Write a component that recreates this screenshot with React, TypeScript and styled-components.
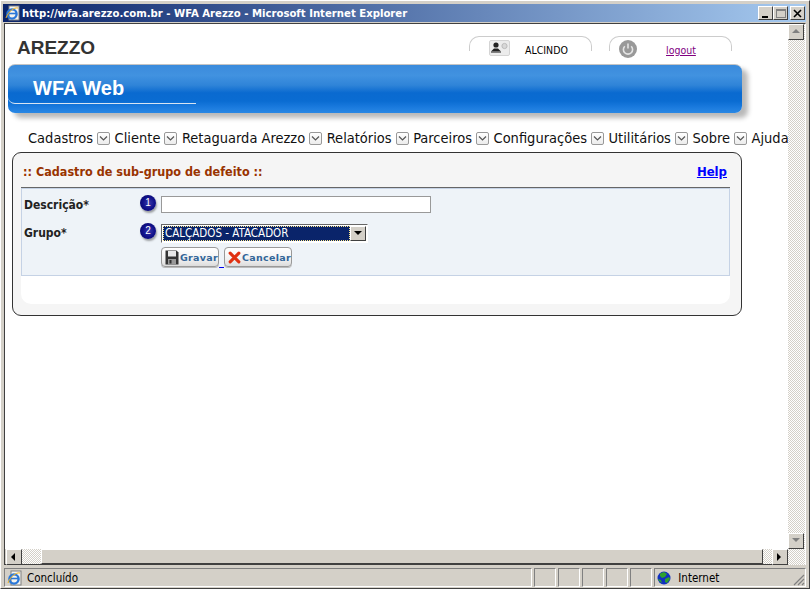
import React from "react";
import styled, { createGlobalStyle } from "styled-components";

const tahoma = `"DejaVu Sans Condensed", "DejaVu Sans", sans-serif`;
const verdana = `"DejaVu Sans", sans-serif`;
const arial = `"Liberation Sans", Arial, sans-serif`;
const hatch = `conic-gradient(#ffffff 25%, #d4d0c8 0 50%, #ffffff 0 75%, #d4d0c8 0) 0 0 / 2px 2px`;

const Global = createGlobalStyle`
	html, body {
		margin: 0;
		padding: 0;
		background: #d4d0c8;
	}
	* {
		box-sizing: border-box;
	}
`;

const Win = styled.div`
	width: 810px;
	height: 589px;
	display: flex;
	flex-direction: column;
	background: #d4d0c8;
	padding: 3px 3px 0 3px;
	border-right: 1px solid #404040;
	border-bottom: 1px solid #404040;
	border-top: 1px solid #ffffff;
	border-left: 1px solid #ffffff;
	overflow: hidden;
`;

const TitleBar = styled.div`
	height: 18px;
	flex: none;
	display: flex;
	align-items: center;
	padding: 0 1px 0 2px;
	margin-left: -1px;
	background: linear-gradient(90deg, #0a246a, #a6caf0);
`;

const TitleText = styled.span`
	margin-left: 1px;
	color: #ffffff;
	font-family: ${tahoma};
	font-size: 11.25px;
	font-weight: bold;
	white-space: nowrap;
`;

const WinButtons = styled.div`
	margin-left: auto;
	display: flex;
	align-items: center;
`;

const WinButton = styled.div<{ $gap?: number }>`
	width: 15px;
	height: 14px;
	margin-left: ${(p) => p.$gap ?? 0}px;
	display: flex;
	align-items: center;
	justify-content: center;
	background: #d4d0c8;
	border: 1px solid;
	border-color: #ffffff #404040 #404040 #ffffff;
`;

const Viewport = styled.div`
	margin-top: 1px;
	height: 542px;
	flex: none;
	display: grid;
	grid-template-columns: minmax(0, 1fr) 17px;
	grid-template-rows: minmax(0, 1fr) 16px;
	background: #ffffff;
	border: 1px solid;
	border-color: #404040 #ffffff #ffffff #404040;
	border-bottom-width: 0;
`;

const Page = styled.div`
	grid-column: 1;
	grid-row: 1;
	overflow: hidden;
	min-width: 0;
	background: #ffffff;
	padding-left: 3px;
`;

const Header = styled.div`
	height: 40px;
	width: 724px;
	display: flex;
	align-items: flex-start;
	padding-left: 9px;
`;

const Logo = styled.div`
	margin-top: 13px;
	color: #333333;
	font-family: ${arial};
	font-size: 19px;
	font-weight: bold;
	line-height: 22px;
`;

const Tabs = styled.div`
	margin-left: auto;
	display: flex;
	gap: 17px;
	padding-top: 12px;
`;

const Tab = styled.div`
	position: relative;
	width: 123px;
	height: 15px;
	border: 1px solid #cccccc;
	border-bottom: none;
	border-radius: 10px 10px 0 0;
	display: flex;
	align-items: flex-start;
`;

const TabIcon = styled.div<{ $left: number }>`
	margin-left: ${(p) => p.$left}px;
	margin-top: 3px;
	flex: none;
	height: 20px;
`;

const TabLabel = styled.span<{ $left: number }>`
	margin-left: ${(p) => p.$left}px;
	margin-top: 7px;
	font-family: ${tahoma};
	font-size: 10.5px;
	line-height: 13px;
	color: #000000;
`;

const LogoutLink = styled.a`
	margin-left: 29px;
	margin-top: 7px;
	font-family: ${tahoma};
	font-size: 10.5px;
	line-height: 13px;
	color: #800080;
	text-decoration: underline;
`;

const Banner = styled.div`
	width: 734px;
	height: 49px;
	border-top: 1px solid #c4c4c4;
	border-radius: 7px;
	background: linear-gradient(180deg, #3b8bdc 0%, #4192e0 22%, #2f84d8 42%, #0a6ad0 58%, #0a6cd2 75%, #1a7ade 88%, #2a88e4 100%);
	box-shadow: 6px 5px 5px rgba(0, 0, 0, 0.28);
`;

const BannerTitle = styled.div`
	width: 188px;
	height: 39px;
	padding: 12px 0 0 25px;
	border-bottom: 1px solid #d8e4f2;
	border-radius: 0 0 0 7px;
	color: #ffffff;
	font-family: ${arial};
	font-size: 20px;
	font-weight: bold;
	line-height: 23px;
`;

const Menu = styled.div`
	display: flex;
	align-items: center;
	height: 17px;
	margin-top: 17px;
	padding-left: 20px;
	white-space: nowrap;
`;

const MenuItem = styled.div`
	display: flex;
	align-items: center;
	flex: none;
	margin-right: 4.5px;
	color: #111111;
	font-family: ${tahoma};
	font-size: 14.5px;
	line-height: 17px;
`;

const MenuArrow = styled.span`
	width: 13px;
	height: 13px;
	margin-left: 4px;
	border: 1px solid #999999;
	border-radius: 2px;
	background: linear-gradient(180deg, #ffffff, #ececec);
	display: flex;
	align-items: center;
	justify-content: center;
`;

const Panel = styled.div`
	width: 730px;
	height: 164px;
	margin: 5px 0 0 4px;
	padding: 0 11px 11px 8px;
	border: 1px solid #333333;
	border-radius: 9px;
	background: #f5f5f5;
	display: flex;
	flex-direction: column;
`;

const PanelHead = styled.div`
	height: 35px;
	flex: none;
	display: flex;
	align-items: center;
	justify-content: space-between;
	padding: 2px 3px 0 2px;
	border-bottom: 1px solid #666666;
`;

const PanelTitle = styled.span`
	color: #993300;
	font-family: ${tahoma};
	font-size: 12.5px;
	font-weight: bold;
`;

const HelpLink = styled.a`
	color: #0000ff;
	font-family: ${tahoma};
	font-size: 13px;
	font-weight: bold;
	text-decoration: underline;
`;

const PanelBody = styled.div`
	flex: 1;
	background: #ffffff;
	border-radius: 0 0 10px 10px;
`;

const Form = styled.div`
	height: 88px;
	padding: 7px 0 0 2px;
	background: #eef3f8;
	border: 1px solid #c5d2e5;
	display: grid;
	grid-template-columns: 116px 21px 1fr;
	grid-template-rows: 28px 23px auto;
	align-items: start;
`;

const FieldLabel = styled.div`
	margin-top: 1px;
	color: #222222;
	font-family: ${tahoma};
	font-size: 12px;
	font-weight: bold;
	line-height: 16px;
`;

const Badge = styled.div`
	width: 16px;
	height: 16px;
	margin-top: -1px;
	border-radius: 50%;
	background: radial-gradient(circle at 55% 50%, #3a3aaa 0%, #10108a 50%, #06065c 100%);
	box-shadow: 1px 2px 2px rgba(0, 0, 0, 0.35);
	color: #ffffff;
	font-family: ${arial};
	font-size: 10px;
	line-height: 16px;
	text-align: center;
`;

const TextInput = styled.div`
	width: 270px;
	height: 17px;
	background: #ffffff;
	border: 1px solid #999999;
`;

const SelectBox = styled.div`
	width: 207px;
	height: 19px;
	display: flex;
	background: #ffffff;
	padding: 1px;
	border: 1px solid;
	border-color: #666666 #ffffff #ffffff #666666;
`;

const SelectValue = styled.div`
	flex: 1;
	background: #0a246a;
	outline: 1px dotted #ffe98a;
	outline-offset: -1px;
	color: #ffffff;
	font-family: ${tahoma};
	font-size: 11.5px;
	line-height: 15px;
	padding-left: 2px;
`;

const SelectArrow = styled.div`
	width: 16px;
	display: flex;
	align-items: center;
	justify-content: center;
	background: #d4d0c8;
	border: 1px solid;
	border-color: #ffffff #404040 #404040 #ffffff;
`;

const Buttons = styled.div`
	grid-column: 3;
	display: flex;
	align-items: flex-end;
`;

const Btn = styled.div<{ $w: number }>`
	width: ${(p) => p.$w}px;
	height: 20px;
	display: flex;
	align-items: center;
	padding-left: 3px;
	gap: 1px;
	background: linear-gradient(180deg, #ffffff, #f2f2f2 60%, #dcdcdc);
	border: 1px solid #999999;
	border-radius: 4px;
	box-shadow: 0 1px 0 #bbbbbb;
	color: #336699;
	font-family: ${verdana};
	font-size: 9.5px;
	font-weight: bold;
	letter-spacing: 0.3px;
`;

const BtnSpace = styled.span`
	width: 5px;
	height: 2px;
	margin-bottom: -1px;
	border-bottom: 1px solid #0000ee;
`;

const VScroll = styled.div`
	grid-column: 2;
	grid-row: 1 / 3;
	display: flex;
	flex-direction: column;
	padding-bottom: 16px;
	background: ${hatch};
`;

const ScrollBtn = styled.div<{ $disabled?: boolean }>`
	width: 16px;
	height: 16px;
	flex: none;
	display: flex;
	align-items: center;
	justify-content: center;
	background: #d4d0c8;
	border: 1px solid;
	border-color: #ffffff #404040 #404040 #ffffff;
`;

const VSpacer = styled.div`
	flex: 1;
`;

const HScroll = styled.div`
	grid-column: 1;
	grid-row: 2;
	display: flex;
	background: #d4d0c8;
	border-bottom: 1px solid #404040;
	padding-left: 1px;
`;

const HTrack = styled.div<{ $w?: number }>`
	flex: ${(p) => (p.$w ? `0 0 ${p.$w}px` : "1")};
	background: ${hatch};
`;

const HThumb = styled.div`
	flex: 1;
	background: #d4d0c8;
	border: 1px solid;
	border-color: #ffffff #404040 #404040 #ffffff;
`;

const StatusBar = styled.div`
	height: 19px;
	margin-top: 3px;
	flex: none;
	display: flex;
	gap: 2px;
`;

const StatusCell = styled.div<{ $w?: number; $grow?: boolean }>`
	position: relative;
	flex: ${(p) => (p.$grow ? "1" : `0 0 ${p.$w}px`)};
	display: flex;
	align-items: center;
	gap: 4px;
	padding-left: 2px;
	border: 1px solid;
	border-color: #808080 #ffffff #ffffff #808080;
	font-family: ${tahoma};
	font-size: 11.5px;
	color: #000000;
`;

const Grip = styled.svg`
	position: absolute;
	right: 0;
	bottom: 0;
`;

const IeIcon = ({ size = 16 }: { size?: number }) => (
	<svg width={size} height={size} viewBox="0 0 16 16">
		<rect x="4" y="1" width="10" height="14" fill="#f4f4f0" stroke="#808080" />
		<circle cx="7" cy="9" r="4.6" fill="none" stroke="#2b78d8" strokeWidth="2.4" />
		<path d="M3 8.5h8.5" stroke="#2b78d8" strokeWidth="1.6" />
		<path d="M1 13C3 7 9 2 13 3" fill="none" stroke="#f0b020" strokeWidth="1" />
	</svg>
);

const GlobeIcon = () => (
	<svg width="14" height="14" viewBox="0 0 14 14">
		<circle cx="7" cy="7" r="6.5" fill="#1030c0" />
		<path d="M3 2.5 7 1l3 2-2 3-3 1-2-2zM8 8l4-2 1 2-3 4-2-1zM1 8l3 1 1 3-3-2z" fill="#2ea02e" />
	</svg>
);

const UserCard = () => (
	<svg width="21" height="17" viewBox="0 0 21 17">
		<rect x="0.5" y="0.5" width="20" height="15" rx="1.5" fill="#ececec" stroke="#d4d4d4" />
		<circle cx="7" cy="5" r="2.6" fill="#222222" />
		<path d="M2 11.5 5 8.5h4l3 3z" fill="#222222" />
		<rect x="2" y="11.5" width="10" height="1.2" fill="#555555" />
		<circle cx="15.5" cy="6" r="2.6" fill="#d8d8d8" stroke="#bbbbbb" />
	</svg>
);

const PowerIcon = () => (
	<svg width="18" height="18" viewBox="0 0 18 18">
		<circle cx="9" cy="9" r="9" fill="#999999" />
		<path d="M5.8 6.2a4.6 4.6 0 1 0 6.4 0" fill="none" stroke="#e4e4e4" strokeWidth="1.6" />
		<path d="M9 3.6v5" stroke="#e4e4e4" strokeWidth="1.6" />
	</svg>
);

const FloppyIcon = () => (
	<svg width="14" height="15" viewBox="0 0 14 15">
		<path d="M0.5 0.5h11l2 2v12h-13z" fill="#333333" />
		<rect x="3" y="1" width="8" height="5.5" fill="#e8e8e8" />
		<rect x="3" y="9" width="8" height="5.5" fill="#999999" />
		<rect x="4.5" y="10" width="2" height="3.5" fill="#333333" />
	</svg>
);

const CancelIcon = () => (
	<svg width="15" height="15" viewBox="0 0 15 15">
		<path d="M2.5 2.5 12.5 12.5M12.5 2.5 2.5 12.5" stroke="#e03010" strokeWidth="3.6" strokeLinecap="round" />
	</svg>
);

const Chevron = () => (
	<svg width="9" height="7" viewBox="0 0 9 7">
		<path d="M1 1.5 4.5 5 8 1.5" fill="none" stroke="#555555" strokeWidth="1.2" />
	</svg>
);

const Tri = ({ dir, color = "#000000" }: { dir: "up" | "down" | "left" | "right"; color?: string }) => {
	const pts = {
		up: "4,1 8,5 0,5",
		down: "0,1 8,1 4,5",
		left: "5,0 5,8 1,4",
		right: "1,0 1,8 5,4",
	}[dir];
	return (
		<svg width="8" height="8" viewBox="0 0 8 8">
			<polygon points={pts} fill={color} />
		</svg>
	);
};

const menuItems = ["Cadastros", "Cliente", "Retaguarda Arezzo", "Relatórios", "Parceiros", "Configurações", "Utilitários", "Sobre", "Ajuda"];

const App = () => {
	return (
		<Win>
			<Global />
			<TitleBar>
				<IeIcon />
				<TitleText>http://wfa.arezzo.com.br - WFA Arezzo - Microsoft Internet Explorer</TitleText>
				<WinButtons>
					<WinButton>
						<svg width="9" height="9" viewBox="0 0 9 9"><rect x="1" y="7" width="6" height="2" fill="#000" /></svg>
					</WinButton>
					<WinButton>
						<svg width="10" height="9" viewBox="0 0 10 9"><rect x="0.5" y="0.5" width="9" height="8" fill="none" stroke="#808080" /><rect x="0" y="0" width="10" height="2" fill="#808080" /></svg>
					</WinButton>
					<WinButton $gap={2}>
						<svg width="9" height="9" viewBox="0 0 9 9"><path d="M1 1l7 7M8 1 1 8" stroke="#000" strokeWidth="1.6" /></svg>
					</WinButton>
				</WinButtons>
			</TitleBar>

			<Viewport>
				<Page>
					<Header>
						<Logo>AREZZO</Logo>
						<Tabs>
							<Tab>
								<TabIcon $left={19}><UserCard /></TabIcon>
								<TabLabel $left={15}>ALCINDO</TabLabel>
							</Tab>
							<Tab>
								<TabIcon $left={9}><PowerIcon /></TabIcon>
								<LogoutLink>logout</LogoutLink>
							</Tab>
						</Tabs>
					</Header>

					<Banner>
						<BannerTitle>WFA Web</BannerTitle>
					</Banner>

					<Menu>
						{menuItems.map((item) => (
							<MenuItem key={item}>
								{item}
								<MenuArrow><Chevron /></MenuArrow>
							</MenuItem>
						))}
					</Menu>

					<Panel>
						<PanelHead>
							<PanelTitle>:: Cadastro de sub-grupo de defeito ::</PanelTitle>
							<HelpLink>Help</HelpLink>
						</PanelHead>
						<PanelBody>
							<Form>
								<FieldLabel>Descrição*</FieldLabel>
								<Badge>1</Badge>
								<TextInput />
								<FieldLabel>Grupo*</FieldLabel>
								<Badge>2</Badge>
								<SelectBox>
									<SelectValue>CALÇADOS - ATACADOR</SelectValue>
									<SelectArrow><Tri dir="down" /></SelectArrow>
								</SelectBox>
								<Buttons>
									<Btn $w={58}><FloppyIcon />Gravar</Btn>
									<BtnSpace />
									<Btn $w={68}><CancelIcon />Cancelar</Btn>
								</Buttons>
							</Form>
						</PanelBody>
					</Panel>
				</Page>

				<VScroll>
					<ScrollBtn $disabled><Tri dir="up" color="#808080" /></ScrollBtn>
					<VSpacer />
					<ScrollBtn $disabled><Tri dir="down" color="#808080" /></ScrollBtn>
				</VScroll>

				<HScroll>
					<ScrollBtn><Tri dir="left" /></ScrollBtn>
					<HTrack $w={19} />
					<HThumb />
					<HTrack $w={9} />
					<ScrollBtn><Tri dir="right" /></ScrollBtn>
				</HScroll>
			</Viewport>

			<StatusBar>
				<StatusCell $grow><IeIcon />Concluído</StatusCell>
				<StatusCell $w={22} />
				<StatusCell $w={22} />
				<StatusCell $w={22} />
				<StatusCell $w={22} />
				<StatusCell $w={22} />
				<StatusCell $w={152}>
					<GlobeIcon />&nbsp;Internet
					<Grip width="12" height="12" viewBox="0 0 12 12">
						<path d="M11 1 1 11M11 5 5 11M11 9 9 11" stroke="#808080" strokeWidth="1.2" />
					</Grip>
				</StatusCell>
			</StatusBar>
		</Win>
	);
};

export default App;
